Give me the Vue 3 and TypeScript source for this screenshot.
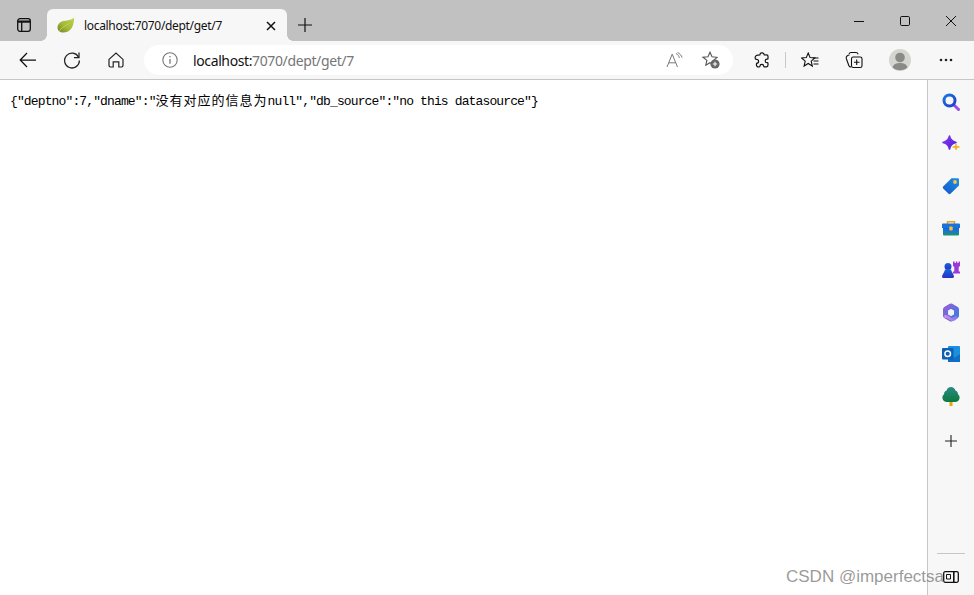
<script setup lang="ts">
const url: string = "localhost:7070/dept/get/7"
</script>

<template>
  <div class="win">
    <div class="titlebar">
      <div class="tabs-btn">
        <svg width="14" height="14" viewBox="0 0 14 14" fill="none" stroke="#111" stroke-width="1.3"><rect x=".7" y=".7" width="12.600" height="12.600" rx="2.200"/><path d="M.7 3.600h12.600" stroke-width="2.200"/><path d="M4.700 4v9.300"/></svg>
      </div>
      <div class="tab">
        <svg class="leaf" width="18" height="16" viewBox="0 0 18 16"><defs><linearGradient id="lf" x1="0" y1="1" x2="1" y2="0"><stop offset="0" stop-color="#77802a"/><stop offset="0.45" stop-color="#a3bb35"/><stop offset="1" stop-color="#bdd24c"/></linearGradient></defs><path d="M17 .6C17.300 9 14 15.200 7 15.600 3 15.800.5 13.500.5 10.500.5 5.500 5 3.500 10 3.400 13 3.300 15.500 2.500 17 .6Z" fill="url(#lf)"/><path d="M2.200 13.800C5 10.500 8.500 8.500 12.500 6.500" stroke="#c9d76a" stroke-width=".7" fill="none"/></svg>
        <span class="tab-title">{{ url }}</span>
        <svg class="tab-x" width="10" height="10" viewBox="0 0 10 10" stroke="#111" stroke-width="1.500"><path d="M1 1l8 8M9 1l-8 8"/></svg>
      </div>
      <div class="newtab">
        <svg width="14" height="14" viewBox="0 0 14 14" stroke="#111" stroke-width="1.200"><path d="M7 0v14M0 7h14"/></svg>
      </div>
      <div class="spacer"></div>
      <div class="winbtn"><svg width="10" height="10" viewBox="0 0 10 10" stroke="#111"><path d="M0 5.500h10"/></svg></div>
      <div class="winbtn"><svg width="10" height="10" viewBox="0 0 10 10" fill="none" stroke="#111"><rect x=".5" y=".5" width="9" height="9" rx="1.200"/></svg></div>
      <div class="winbtn"><svg width="10" height="10" viewBox="0 0 10 10" stroke="#111"><path d="M0 0l10 10M10 0L0 10"/></svg></div>
    </div>

    <div class="toolbar">
      <div class="tbtn">
        <svg width="18" height="16" viewBox="0 0 18 16" fill="none" stroke="#111" stroke-width="1.250"><path d="M17 8H1.200M8 1L1.200 8 8 15"/></svg>
      </div>
      <div class="tbtn">
        <svg width="18" height="18" viewBox="0 0 18 18" fill="none" stroke="#222" stroke-width="1.250"><path d="M15.600 6.200A7.400 7.400 0 1 0 16.400 9.500"/><path d="M16 1.500v5h-5"/></svg>
      </div>
      <div class="tbtn">
        <svg width="16" height="16" viewBox="0 0 16 16" fill="none" stroke="#222" stroke-width="1.200"><path d="M1 7.400 8 1l7 6.400v6.200a1.400 1.400 0 0 1-1.400 1.400h-2.800v-5.200H5.200V15H2.400A1.400 1.400 0 0 1 1 13.600Z"/></svg>
      </div>
      <div class="address">
        <svg class="info" width="16" height="16" viewBox="0 0 16 16" fill="none" stroke="#777" stroke-width="1.100"><circle cx="8" cy="8" r="7.200"/><path d="M8 7v4.800" stroke-width="1.300"/><circle cx="8" cy="4.700" r=".8" fill="#777" stroke="none"/></svg>
        <span class="url"><span class="host">localhost:</span>7070/dept/get/7</span>
        <div class="spacer"></div>
        <svg class="readaloud" width="18" height="16" viewBox="0 0 18 16" fill="none" stroke="#777" stroke-width="1"><path d="M1 15 6.200 2.200 11.500 15M2.800 10.800h7"/><path d="M10 1.500c2 1 3 2.500 3.400 4.400M11.500 .5c2.400 1 4 3 4.600 5.200"/></svg>
        <svg class="favadd" width="18" height="18" viewBox="0 0 18 18" fill="none" stroke="#555" stroke-width="1.100"><path d="M8 1.200l2 4.600 5 .5-3.700 3.300.9 3.600-1.200.2-3-1.700-4.200 2.500 1.100-4.800L1 6.300l5-.5Z"/><circle cx="13" cy="13" r="4.600" fill="#666" stroke="none"/><path d="M13 10.800v4.400M10.800 13h4.400" stroke="#fff"/></svg>
      </div>
      <div class="tbtn ext">
        <svg width="16" height="16" viewBox="0 0 16 16" fill="none" stroke="#111" stroke-width="1.200"><path d="M5.800 2.800C6 1.500 7 .8 8.200 .9c1.200.1 2 1 2.100 2.100l2.300-.1c.8 0 1.400.6 1.400 1.400v2.200c0 .5-.4.700-.9.700-1 0-1.900.7-1.900 1.700s.9 1.800 1.900 1.800c.5 0 .9.200.9.700v1.700c0 1-.6 1.700-1.500 1.700h-2.200c-.5 0-.7-.4-.7-.8 0-1-.8-1.700-1.800-1.700s-1.800.7-1.800 1.700c0 .4-.2.800-.7.800C3.500 15.500 2.400 14 2.400 12.800l.2-1.500c1.200 0 2-.9 2-2 0-1.200-1-2-2-2 -.8 0-1.500-.7-1.500-1.600C1.100 4 2.800 2.800 5.800 2.800Z"/></svg>
      </div>
      <div class="sep"></div>
      <div class="tbtn fav">
        <svg width="18" height="16" viewBox="0 0 18 16" fill="none" stroke="#111" stroke-width="1.100"><path d="M7.200 1l1.900 4.600 4.700.4-3.600 3.200 1.100 4.800-4.100-2.500L3.100 14l1.100-4.800L.6 6l4.700-.4Z"/><path d="M12 6h5.500M12.500 9h5M12.500 12h5"/></svg>
      </div>
      <div class="tbtn">
        <svg width="18" height="18" viewBox="0 0 18 18" fill="none" stroke="#111" stroke-width="1.100"><path d="M4 3.200c.3-1 1-1.700 2-1.700h5c1 0 1.800.7 2.200 1.700"/><path d="M6 16c-1 0-1.800-.5-2.200-1.500L1.300 7.500C1 6.500 1.300 5.500 2.300 4.700 3 4.100 3.500 4 4.500 4"/><rect x="6.500" y="6" width="10.500" height="10.500" rx="1.800"/><path d="M11.700 8.500v5.500M9 11.200h5.500"/></svg>
      </div>
      <div class="tbtn profile">
        <div class="avatar">
          <svg width="22" height="22" viewBox="0 0 22 22"><circle cx="11" cy="8.500" r="4.800" fill="#8a8a86"/><path d="M3.500 18.500c1-3.600 4-4.500 7.500-4.500s6.500.9 7.500 4.500c-2 1.800-4.500 2.800-7.500 2.800s-5.500-1-7.500-2.800Z" fill="#8a8a86"/></svg>
        </div>
      </div>
      <div class="tbtn">
        <svg width="14" height="4" viewBox="0 0 14 4" fill="#222"><circle cx="2" cy="2" r="1.300"/><circle cx="7" cy="2" r="1.300"/><circle cx="12" cy="2" r="1.300"/></svg>
      </div>
    </div>

    <div class="main">
      <div class="page">
        <pre class="json">{"deptno":7,"dname":"<span class="cjk">没有对应的信息为</span>null","db_source":"no this datasource"}</pre>
      </div>
      <aside class="sidebar">
        <div class="sicon">
          <svg width="18" height="18" viewBox="0 0 18 18" fill="none"><defs><linearGradient id="sg" x1="0" y1="0" x2="1" y2="1"><stop offset="0" stop-color="#1677e0"/><stop offset="1" stop-color="#1b3fd0"/></linearGradient></defs><path d="M11.500 11.500l5 5" stroke="#9a4fe0" stroke-width="3" stroke-linecap="round"/><circle cx="7.500" cy="7.500" r="5.500" stroke="url(#sg)" stroke-width="3"/></svg>
        </div>
        <div class="sicon">
          <svg width="18" height="18" viewBox="0 0 18 18"><defs><linearGradient id="sp" x1="0" y1="0" x2="1" y2="1"><stop offset="0" stop-color="#8a35f5"/><stop offset="1" stop-color="#4a22d8"/></linearGradient></defs><path d="M7.500 1C8.200 5 10 6.500 14 7.500 10 8.500 8.200 10 7.500 14 6.800 10 5 8.500 1 7.500 5 6.500 6.800 5 7.500 1Z" fill="url(#sp)" stroke="url(#sp)" stroke-width="1.600" stroke-linejoin="round"/><path d="M14 9c.3 1.900.9 2.500 3.500 3-2.600.5-3.200 1.100-3.500 3-.3-1.900-.9-2.500-3.500-3 2.600-.5 3.200-1.100 3.500-3Z" fill="#f5b323" stroke="#f5b323" stroke-width=".8" stroke-linejoin="round"/></svg>
        </div>
        <div class="sicon">
          <svg width="18" height="18" viewBox="0 0 18 18"><defs><linearGradient id="st" x1="0" y1="1" x2="1" y2="0"><stop offset="0" stop-color="#1257c9"/><stop offset="1" stop-color="#1d8fe8"/></linearGradient></defs><path d="M9.500 1.200H16a1 1 0 0 1 1 1V8.500L8.500 16.800a1.500 1.500 0 0 1-2 0L1.200 11.500a1.500 1.500 0 0 1 0-2Z" fill="url(#st)"/><circle cx="13" cy="5" r="1.900" fill="#f6c945"/></svg>
        </div>
        <div class="sicon">
          <svg width="18" height="16" viewBox="0 0 18 16"><defs><linearGradient id="bc" x1="0" y1="0" x2="0" y2="1"><stop offset="0" stop-color="#1668d8"/><stop offset=".5" stop-color="#1a78c8"/><stop offset="1" stop-color="#1f9460"/></linearGradient></defs><path d="M5.500 4V1.700h7V4" fill="none" stroke="#e8a317" stroke-width="1.500"/><path d="M1 3.500h16a1 1 0 0 1 1 1v3.500H0V4.500a1 1 0 0 1 1-1Z" fill="#1a72dc"/><path d="M1 8h16v6.500a1 1 0 0 1-1 1H2a1 1 0 0 1-1-1Z" fill="url(#bc)"/><rect x="7.300" y="6.500" width="3.400" height="4" rx=".8" fill="#f6c030"/></svg>
        </div>
        <div class="sicon">
          <svg width="18" height="18" viewBox="0 0 18 18"><defs><linearGradient id="sc" x1="0" y1="0" x2="0" y2="1"><stop offset="0" stop-color="#1468d8"/><stop offset="1" stop-color="#2a2ec8"/></linearGradient></defs><circle cx="6" cy="5.500" r="3.500" fill="url(#sc)"/><path d="M3 8.500h6l.5 1.500c.8 2 2 3 2.400 5 .2 1-.3 2-1.400 2H1.500C.4 17-.1 16 .1 15 .5 13 2 12 2.500 10Z" fill="url(#sc)"/><path d="M11 .5h1.600v1.500h1.300V.5h1.400v1.500h1.300V.5H18V5l-1.300 1v4.500H18V12.500h-7V10.500h1.300V6L11 5Z" fill="#9a39d8"/></svg>
        </div>
        <div class="sicon">
          <svg width="18" height="19" viewBox="0 0 18 19" fill="none"><defs><linearGradient id="m1" x1="0" y1="0" x2="1" y2="1"><stop offset="0" stop-color="#8e62d8"/><stop offset="1" stop-color="#3c7be0"/></linearGradient><linearGradient id="m2" x1="0" y1="0" x2="1" y2="0"><stop offset="0" stop-color="#d68ae0"/><stop offset="1" stop-color="#8a7be8"/></linearGradient><linearGradient id="m3" x1="0" y1="0" x2="0" y2="1"><stop offset="0" stop-color="#4a90e8"/><stop offset="1" stop-color="#2fb5d8"/></linearGradient></defs><path d="M9 3l5.500 3.200v6.600L9 16l-5.500-3.200V6.200Z" stroke="url(#m1)" stroke-width="5" stroke-linejoin="round"/><path d="M14.500 6v7" stroke="url(#m3)" stroke-width="5" stroke-linecap="round"/><path d="M3.500 13.500c2.500-.5 4 3 6.500 3 1.500 0 3-.8 4-2" stroke="url(#m2)" stroke-width="3" stroke-linecap="round"/><circle cx="9" cy="9.500" r="2.700" fill="#eef3fa"/></svg>
        </div>
        <div class="sicon">
          <svg width="18" height="18" viewBox="0 0 18 18"><rect x="6" y="1" width="12" height="16" rx="1" fill="#1a90e0"/><path d="M6 9l6 4 6-4v8H6Z" fill="#0f6fc5"/><rect x="0" y="3" width="11.500" height="11.500" rx="1" fill="#0d5fb8"/><circle cx="5.700" cy="8.700" r="2.800" fill="none" stroke="#fff" stroke-width="1.500"/></svg>
        </div>
        <div class="sicon">
          <svg width="18" height="19" viewBox="0 0 18 19"><defs><linearGradient id="tr" x1="0" y1="0" x2="0" y2="1"><stop offset="0" stop-color="#2a8a88"/><stop offset="1" stop-color="#0c7a3c"/></linearGradient></defs><rect x="7.500" y="14" width="3" height="5" fill="#e8a21c"/><path d="M9 0c2.200 0 3.900 1.500 4.400 3.500 1.600.5 2.800 2 2.500 3.700 1.300 1 2 2.600 1.600 4.200C17 13.500 15.500 15 13 15H5C2.500 15 1 13.500.5 11.400.1 9.800.8 8.200 2.100 7.200 1.800 5.500 3 4 4.600 3.500 5.100 1.500 6.800 0 9 0Z" fill="url(#tr)"/></svg>
        </div>
        <div class="sicon plus">
          <svg width="14" height="14" viewBox="0 0 14 14" stroke="#222" stroke-width="1.100"><path d="M7 1v12M1 7h12"/></svg>
        </div>
        <div class="spacer"></div>
        <div class="sidesep"></div>
        <div class="sidebottom">
          <svg width="16" height="12" viewBox="0 0 16 12" fill="none" stroke="#111" stroke-width="1.300"><rect x=".7" y=".7" width="14.600" height="10.600" rx="1.500"/><path d="M10.800 1v10" stroke-width="1.600"/><path d="M3.500 3.500h4v4.500h-4Z" stroke-width="1"/></svg>
        </div>
      </aside>
      <div class="watermark">CSDN @imperfectsa</div>
    </div>
  </div>
</template>

<style scoped>
.win {
  width: 974px;
  height: 595px;
  display: flex;
  flex-direction: column;
  overflow: hidden;
  background: #fff;
  font-family: "Open Sans", "Noto Sans", sans-serif;
  color: #111;
  position: relative;
}
.spacer { flex: 1; }
.titlebar {
  height: 41px;
  flex: none;
  display: flex;
  align-items: flex-end;
  background: #c1c1c1;
}
.tabs-btn {
  width: 14px;
  height: 14px;
  margin: 0 16px 9px 17px;
  display: flex;
}
.tab {
  position: relative;
  width: 240px;
  height: 32px;
  background: #f7f7f7;
  border-radius: 6px 6px 0 0;
  display: flex;
  align-items: center;
}
.tab::before,
.tab::after {
  content: "";
  position: absolute;
  bottom: 0;
  width: 6px;
  height: 6px;
}
.tab::before {
  left: -6px;
  background: radial-gradient(circle at 0 0, transparent 5.500px, #f7f7f7 6px);
}
.tab::after {
  right: -6px;
  background: radial-gradient(circle at 100% 0, transparent 5.500px, #f7f7f7 6px);
}
.leaf { margin-left: 10px; flex: none; }
.tab-title {
  margin-left: 9px;
  font-family: "Noto Sans", sans-serif;
  font-size: 12px;
  letter-spacing: -0.32px;
  color: #111;
  white-space: nowrap;
}
.tab-x { position: absolute; right: 11px; top: 12px; }
.newtab {
  width: 14px;
  height: 14px;
  margin: 0 0 9px 11px;
  display: flex;
}
.winbtn {
  width: 46px;
  height: 41px;
  display: flex;
  align-items: center;
  justify-content: center;
}
.toolbar {
  height: 39px;
  flex: none;
  display: flex;
  align-items: center;
  background: #f7f7f7;
  padding-left: 6px;
  border-bottom: 1px solid #c6c6c6;
  box-sizing: border-box;
}
.tbtn {
  width: 44px;
  height: 38px;
  flex: none;
  display: flex;
  align-items: center;
  justify-content: center;
}
.tbtn.ext { margin-left: 7px; }
.tbtn.fav { margin-left: 2px; }
.tbtn.profile { margin-left: 2px; margin-right: 2px; }
.sep {
  width: 1px;
  height: 16px;
  margin-left: 1px;
  background: #c9c9c9;
  flex: none;
}
.address {
  width: 589px;
  height: 30px;
  margin-left: 6px;
  background: #fff;
  border-radius: 15px;
  display: flex;
  align-items: center;
  flex: none;
}
.info { margin-left: 18px; flex: none; }
.url {
  margin-left: 15px;
  font-family: "Noto Sans", sans-serif;
  font-size: 14px;
  letter-spacing: -0.38px;
  color: #767676;
  white-space: nowrap;
}
.host { color: #111; }
.readaloud { flex: none; margin-right: 18px; }
.favadd { flex: none; margin-right: 13px; }
.avatar {
  width: 22px;
  height: 22px;
  border-radius: 50%;
  background: #d4d4d0;
  overflow: hidden;
}
.main {
  flex: 1;
  display: flex;
  min-height: 0;
  position: relative;
}
.page {
  flex: 1;
  background: #fff;
  padding: 12px 10px;
}
.json {
  margin: 0;
  font-family: "Liberation Mono", monospace;
  font-size: 13px;
  letter-spacing: -0.87px;
  line-height: 16px;
  color: #000;
  white-space: pre;
}
.cjk {
  font-family: "Noto Sans CJK SC", sans-serif;
  font-size: 13px;
  letter-spacing: 1px;
  line-height: 16px;
}
.sidebar {
  width: 47px;
  flex: none;
  background: #f7f7f7;
  border-left: 1px solid #c6c6c6;
  box-sizing: border-box;
  display: flex;
  flex-direction: column;
  align-items: center;
  padding-top: 1px;
}
.sicon {
  height: 42px;
  width: 100%;
  flex: none;
  display: flex;
  align-items: center;
  justify-content: center;
}
.plus { margin-top: 3px; }
.sidesep {
  width: 28px;
  height: 1px;
  background: #c6c6c6;
  margin-bottom: 17px;
}
.sidebottom {
  height: 12px;
  margin-bottom: 12px;
  display: flex;
}
.watermark {
  position: absolute;
  left: 786px;
  top: 488px;
  font-family: "Liberation Sans", sans-serif;
  font-size: 17px;
  line-height: 18px;
  color: rgba(120, 120, 120, 0.75);
  white-space: nowrap;
}
</style>
